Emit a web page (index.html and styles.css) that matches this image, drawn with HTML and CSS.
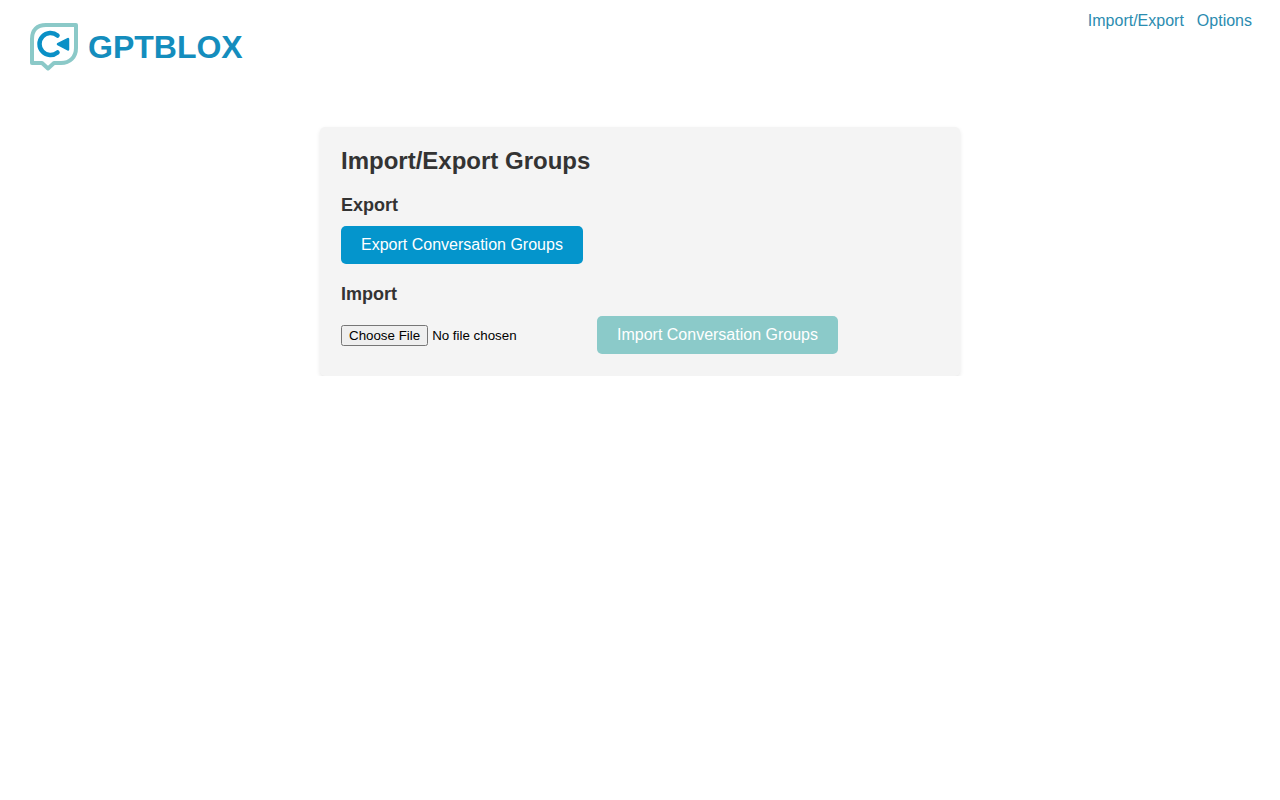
FILE: index.html
```html
<!DOCTYPE html>
<html lang="en">
<head>
  <meta charset="utf-8">
  <meta name="viewport" content="width=device-width, initial-scale=1">
  <title>GPTBLOX</title>
  <link rel="stylesheet" href="styles.css">
</head>
<body>
  <header class="header">
    <div class="brand">
      <svg class="logo" viewBox="0 0 50 50" aria-hidden="true">
        <path class="logo-bubble" d="M17 3H47V26C47 35 41 41 32 41H25L19 46.500L13 41H3V17C3 8 8 3 17 3Z"/>
        <path class="logo-ring" d="M28.500 13.500A11 11 0 1 0 28.500 30.500"/>
        <path class="logo-arrow" d="M29 22.200L39 17V27.500Z"/>
      </svg>
      <h1 class="brand-name">GPTBLOX</h1>
    </div>
    <nav class="nav">
      <a href="#import-export">Import/Export</a>
      <a href="#options">Options</a>
    </nav>
  </header>
  <main class="card" id="import-export">
    <h2 class="title">Import/Export Groups</h2>
    <section class="section">
      <h3 class="subtitle">Export</h3>
      <button class="button" type="button">Export Conversation Groups</button>
    </section>
    <section class="section">
      <h3 class="subtitle" id="import-title">Import</h3>
      <div class="import-row">
        <input class="file" type="file" aria-labelledby="import-title">
        <button class="button button-muted" type="button" disabled>Import Conversation Groups</button>
      </div>
    </section>
  </main>
</body>
</html>
```
FILE: styles.css
```css
* {
  box-sizing: border-box;
}

body {
  margin: 0;
  background: #fff;
  color: #333;
  font-family: "Liberation Sans", Arial, sans-serif;
  font-size: 16px;
}

h1,
h2,
h3 {
  margin: 0;
}

.header {
  display: flex;
  justify-content: space-between;
  align-items: flex-start;
  padding: 0 28px 0 29px;
}

.brand {
  display: flex;
  align-items: center;
  gap: 9px;
  padding-top: 22px;
}

.logo {
  width: 50px;
  height: 50px;
  fill: none;
  stroke-linejoin: round;
}

.logo-bubble {
  stroke: #8bc9c8;
  stroke-width: 4;
}

.logo-ring {
  stroke: #0a90c6;
  stroke-width: 4.5;
  stroke-linecap: round;
}

.logo-arrow {
  fill: #0a90c6;
  stroke: #0a90c6;
  stroke-width: 2.5;
}

.brand-name {
  color: #148dbd;
  font-size: 32px;
  line-height: 36px;
}

.nav {
  display: flex;
  gap: 13px;
  padding-top: 12px;
}

.nav a {
  color: #2b8cb0;
  line-height: 18px;
  text-decoration: none;
}

.card {
  max-width: 640px;
  margin: 55px auto 0;
  padding: 20px 20px 20px 21px;
  border-radius: 5px;
  background: #f4f4f4;
  box-shadow: 0 2px 4px rgba(0, 0, 0, 0.1);
}

.title {
  margin-bottom: 20px;
  font-size: 24px;
  line-height: 28px;
}

.section + .section {
  margin-top: 20px;
}

.subtitle {
  margin-bottom: 10px;
  font-size: 18px;
  line-height: 21px;
}

.button {
  padding: 10px 20px;
  border: 0;
  border-radius: 5px;
  background: #0495cc;
  color: #fff;
  font: inherit;
  line-height: 18px;
}

.button-muted {
  background: #8bcac9;
}

.import-row {
  display: flex;
  flex-wrap: wrap;
  align-items: center;
  gap: 4px;
  padding: 1px 0 2px;
}

.file {
  width: 252px;
  color: #000;
  font-family: inherit;
}
```
